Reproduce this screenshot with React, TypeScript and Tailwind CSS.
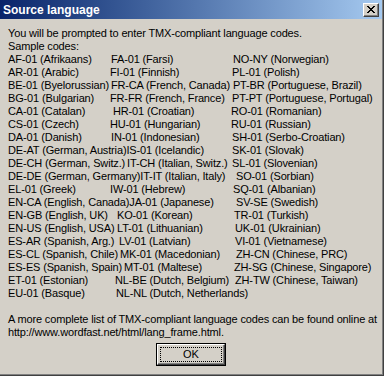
type Row = { a: string; b: string; c?: string; wa: string; wab: string; gap?: boolean };

// wa: where the second column starts, wab: the tab stop of the third column
const rows: Row[] = [
  { a: 'AF-01 (Afrikaans)', b: 'FA-01 (Farsi)', c: 'NO-NY (Norwegian)', wa: 'min-w-[103px]', wab: 'min-w-[225px]' },
  { a: 'AR-01 (Arabic)', b: 'FI-01 (Finnish)', c: 'PL-01 (Polish)', wa: 'min-w-[102px]', wab: 'min-w-[224px]' },
  { a: 'BE-01 (Byelorussian)', b: 'FR-CA (French, Canada)', c: 'PT-BR (Portuguese, Brazil)', wa: 'min-w-[100px]', wab: 'min-w-[224px]', gap: true },
  { a: 'BG-01 (Bulgarian)', b: 'FR-FR (French, France)', c: 'PT-PT (Portuguese, Portugal)', wa: 'min-w-[102px]', wab: 'min-w-[224px]' },
  { a: 'CA-01 (Catalan)', b: 'HR-01 (Croatian)', c: 'RO-01 (Romanian)', wa: 'min-w-[105px]', wab: 'min-w-[223px]' },
  { a: 'CS-01 (Czech)', b: 'HU-01 (Hungarian)', c: 'RU-01 (Russian)', wa: 'min-w-[102px]', wab: 'min-w-[223px]' },
  { a: 'DA-01 (Danish)', b: 'IN-01 (Indonesian)', c: 'SH-01 (Serbo-Croatian)', wa: 'min-w-[103px]', wab: 'min-w-[224px]' },
  { a: 'DE-AT (German, Austria)', b: 'IS-01 (Icelandic)', c: 'SK-01 (Slovak)', wa: 'min-w-[100px]', wab: 'min-w-[224px]' },
  { a: 'DE-CH (German, Switz.)', b: 'IT-CH (Italian, Switz.)', c: 'SL-01 (Slovenian)', wa: 'min-w-[102px]', wab: 'min-w-[224px]', gap: true },
  { a: 'DE-DE (German, Germany)', b: 'IT-IT (Italian, Italy)', c: 'SO-01 (Sorbian)', wa: 'min-w-[100px]', wab: 'min-w-[228px]' },
  { a: 'EL-01 (Greek)', b: 'IW-01 (Hebrew)', c: 'SQ-01 (Albanian)', wa: 'min-w-[102px]', wab: 'min-w-[225px]' },
  { a: 'EN-CA (English, Canada)', b: 'JA-01 (Japanese)', c: 'SV-SE (Swedish)', wa: 'min-w-[100px]', wab: 'min-w-[228px]' },
  { a: 'EN-GB (English, UK)', b: 'KO-01 (Korean)', c: 'TR-01 (Turkish)', wa: 'min-w-[109px]', wab: 'min-w-[226px]' },
  { a: 'EN-US (English, USA)', b: 'LT-01 (Lithuanian)', c: 'UK-01 (Ukrainian)', wa: 'min-w-[109px]', wab: 'min-w-[227px]' },
  { a: 'ES-AR (Spanish, Arg.)', b: 'LV-01 (Latvian)', c: 'VI-01 (Vietnamese)', wa: 'min-w-[111px]', wab: 'min-w-[227px]' },
  { a: 'ES-CL (Spanish, Chile)', b: 'MK-01 (Macedonian)', c: 'ZH-CN (Chinese, PRC)', wa: 'min-w-[100px]', wab: 'min-w-[228px]', gap: true },
  { a: 'ES-ES (Spanish, Spain)', b: 'MT-01 (Maltese)', c: 'ZH-SG (Chinese, Singapore)', wa: 'min-w-[100px]', wab: 'min-w-[226px]', gap: true },
  { a: 'ET-01 (Estonian)', b: 'NL-BE (Dutch, Belgium)', c: 'ZH-TW (Chinese, Taiwan)', wa: 'min-w-[107px]', wab: 'min-w-[227px]' },
  { a: 'EU-01 (Basque)', b: 'NL-NL (Dutch, Netherlands)', wa: 'min-w-[108px]', wab: 'min-w-[228px]' },
];

function CloseGlyph() {
  return (
    <svg width="8" height="7" viewBox="0 0 8 7" shapeRendering="crispEdges">
      <path d="M0 0h2v1H0zM6 0h2v1H6zM1 1h2v1H1zM5 1h2v1H5zM2 2h4v1H2zM3 3h2v1H3zM2 4h4v1H2zM1 5h2v1H1zM5 5h2v1H5zM0 6h2v1H0zM6 6h2v1H6z" fill="#000" />
    </svg>
  );
}

export default function App() {
  return (
    <div className="w-[384px] h-[376px] overflow-hidden bg-[#d4d0c8] border-r border-b border-[#404040] font-['Liberation_Sans',Arial,sans-serif] text-[11px] text-black">
      <div className="h-full flex flex-col border-r border-b border-[#808080]">
        {/* title bar */}
        <div className="h-[19px] shrink-0 flex items-center justify-between px-[3px] bg-gradient-to-r from-[#0a246a] to-[#a6caf0]">
          <span className="text-white font-bold text-[12px] leading-none">Source language</span>
          <div className="w-[16px] h-[14px] flex items-center justify-center bg-[#d4d0c8] border border-t-white border-l-white border-r-[#404040] border-b-[#404040] shadow-[inset_-1px_-1px_0_#808080]">
            <CloseGlyph />
          </div>
        </div>

        {/* body */}
        <div className="flex flex-col pt-[8px] pl-[8px] leading-[13px] whitespace-nowrap tracking-[-0.15px]">
          <div>You will be prompted to enter TMX-compliant language codes.</div>
          <div>Sample codes:</div>
          {rows.map((r) => (
            <div key={r.a} className="flex">
              <div className={`${r.wab} shrink-0 flex`}>
                <span className={`${r.wa} shrink-0 ${r.gap ? 'pr-[2px]' : ''}`}>{r.a}</span>
                <span className="pr-[3px]">{r.b}</span>
              </div>
              {r.c && <span>{r.c}</span>}
            </div>
          ))}
          <div className="h-[13px]" />
          <div>A more complete list of TMX-compliant language codes can be found online at</div>
          <div>http://www.wordfast.net/html/lang_frame.html.</div>
        </div>

        <div className="flex justify-center mt-[4px]">
          <div className="w-[70px] h-[23px] bg-[#d4d0c8] border border-black">
            <div className="h-full border border-t-white border-l-white border-r-[#404040] border-b-[#404040] shadow-[inset_-1px_-1px_0_#808080] p-[2px]">
              <div className="h-full flex items-center justify-center outline-1 outline-dotted outline-black -outline-offset-1 leading-none">
                OK
              </div>
            </div>
          </div>
        </div>
      </div>
    </div>
  );
}
